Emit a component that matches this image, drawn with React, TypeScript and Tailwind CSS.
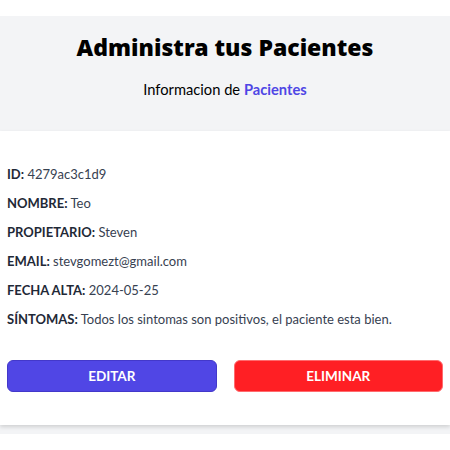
import React from "react";

const rows: [string, string][] = [
  ["ID:", "4279ac3c1d9"],
  ["NOMBRE:", "Teo"],
  ["PROPIETARIO:", "Steven"],
  ["EMAIL:", "stevgomezt@gmail.com"],
  ["FECHA ALTA:", "2024-05-25"],
  ["SÍNTOMAS:", "Todos los sintomas son positivos, el paciente esta bien."],
];

export default function App() {
  return (
    <div className="w-[450px] h-[450px] bg-white pt-[16px]" style={{ fontFamily: 'Lato, "Noto Sans", sans-serif' }}>
      <div className="bg-[#f3f4f6] pb-[9px]">
        <div className="h-[115px] flex flex-col items-center pt-[14px]">
          <h2 className="text-[23px] leading-[34px] font-black text-black" style={{ fontFamily: '"Noto Sans", sans-serif' }}>Administra tus Pacientes</h2>
          <p className="mt-[15px] text-[14.7px] leading-[20px] text-black">
            Informacion de <span className="text-[#4f46e5] font-bold">Pacientes</span>
          </p>
        </div>
        <div className="bg-white shadow-[0_2px_4px_rgba(0,0,0,0.15)] px-[7px] pt-[33px] pb-[33px]">
          <div className="flex flex-col gap-[9px]">
            {rows.map(([k, v]) => (
              <p key={k} className="text-[13px] leading-[20px] text-[#374151]">
                <span className="font-bold text-[#1f2937]">{k}</span> {v}
              </p>
            ))}
          </div>
          <div className="flex gap-[17px] mt-[31px]">
            <button className="flex-1 h-[32px] rounded-[6px] bg-[#5046e5] border border-[#4338ca] text-white font-bold text-[13.5px] uppercase">Editar</button>
            <button className="flex-1 h-[32px] rounded-[6px] bg-[#ff1f24] border border-[#ff6b6e] text-white font-bold text-[13.5px] uppercase">Eliminar</button>
          </div>
        </div>
      </div>
    </div>
  );
}
